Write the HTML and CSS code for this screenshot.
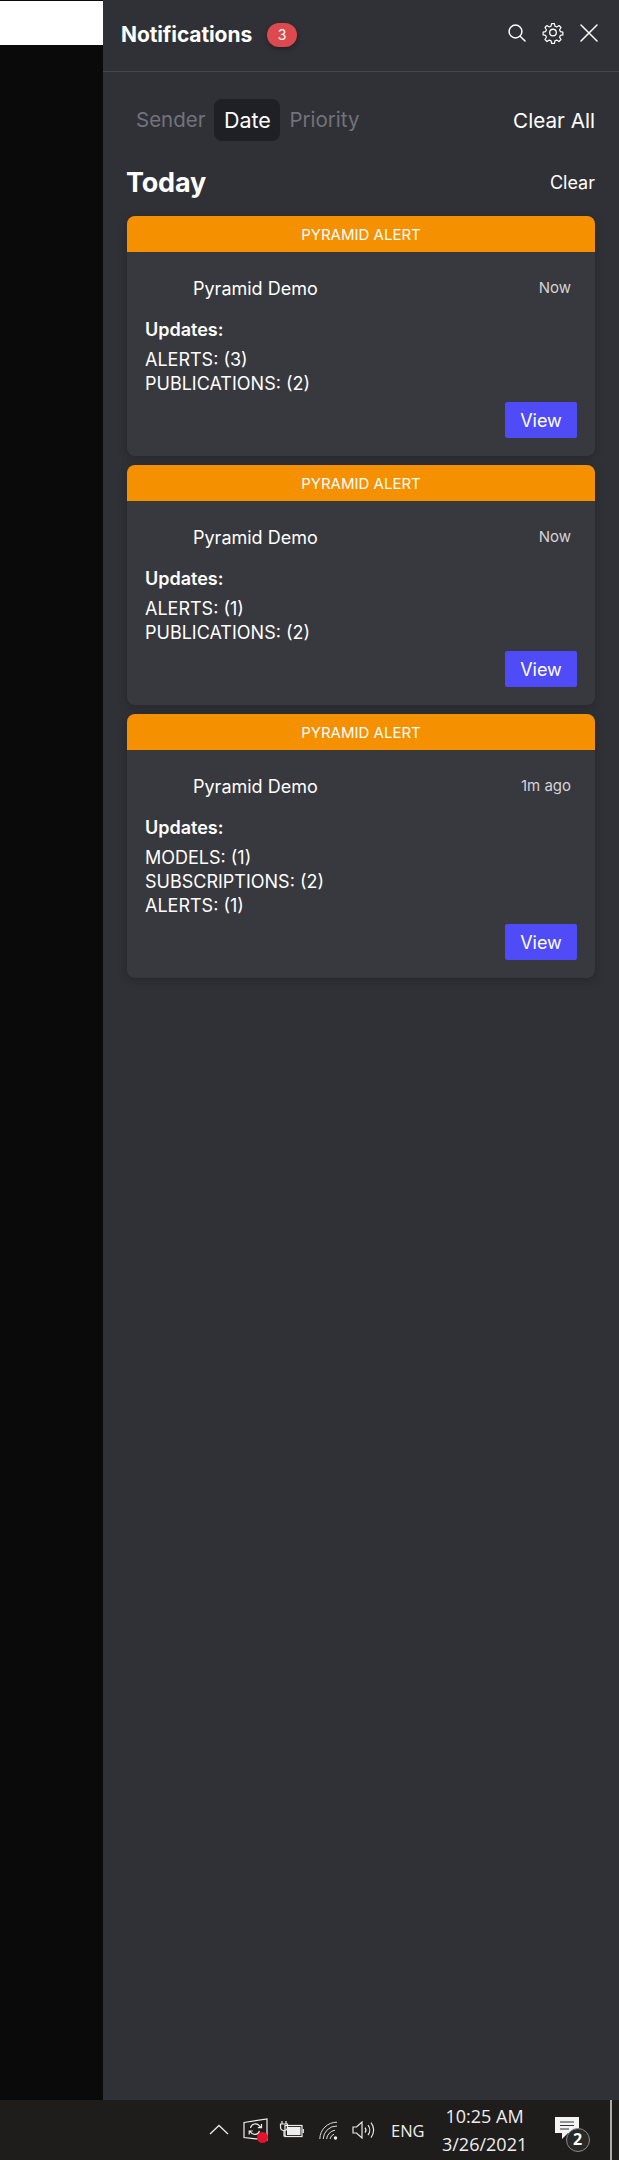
FILE: index.html
```html
<!DOCTYPE html>
<html lang="en">
<head>
<meta charset="utf-8">
<title>Notifications</title>
<link rel="stylesheet" href="styles.css">
</head>
<body>
<div class="screen">
  <div class="main">
    <div class="backdrop"><div class="backdrop-white"></div></div>
    <aside class="panel">
      <header class="panel-head">
        <div class="title">Notifications</div>
        <div class="badge">3</div>
        <div class="head-icons">
          <svg class="ic-search" width="18" height="18" viewBox="0 0 18 18" fill="none" stroke="#fff" stroke-width="1.5" stroke-linecap="round"><circle cx="7.5" cy="7.5" r="6.4"/><path d="M12.2 12.2 17 17"/></svg>
          <svg class="ic-gear" width="22" height="22" viewBox="0 0 24 24" fill="none" stroke="#fff" stroke-width="1.4" stroke-linejoin="round"><path d="M10.3 1.5h3.4l.6 3 2.2.9 2.6-1.7 2.4 2.4-1.7 2.6.9 2.2 3 .6v3.4l-3 .6-.9 2.2 1.7 2.6-2.4 2.4-2.6-1.7-2.2.9-.6 3h-3.4l-.6-3-2.2-.9-2.6 1.7-2.4-2.4 1.7-2.6-.9-2.2-3-.6v-3.4l3-.6.9-2.2-1.7-2.6 2.4-2.4 2.6 1.7 2.2-.9z" transform="translate(12 12) scale(.92) translate(-12 -12.6)"/><circle cx="12" cy="11.5" r="3.6"/></svg>
          <svg class="ic-close" width="18" height="18" viewBox="0 0 18 18" fill="none" stroke="#fff" stroke-width="1.5" stroke-linecap="round"><path d="M1 1 17 17M17 1 1 17"/></svg>
        </div>
      </header>
      <div class="tabs-row">
        <div class="tabs">
          <span class="tab">Sender</span>
          <span class="tab tab-active">Date</span>
          <span class="tab">Priority</span>
        </div>
        <span class="clear-all">Clear All</span>
      </div>
      <div class="day-row">
        <h2 class="day">Today</h2>
        <span class="clear">Clear</span>
      </div>
      <div class="cards">
        <article class="card">
          <div class="card-head">PYRAMID ALERT</div>
          <div class="card-body">
            <div class="sender-row"><span class="sender">Pyramid Demo</span><span class="time">Now</span></div>
            <div class="updates">Updates:</div>
            <ul class="items"><li>ALERTS: (3)</li><li>PUBLICATIONS: (2)</li></ul>
            <div class="actions"><button class="view">View</button></div>
          </div>
        </article>
        <article class="card">
          <div class="card-head">PYRAMID ALERT</div>
          <div class="card-body">
            <div class="sender-row"><span class="sender">Pyramid Demo</span><span class="time">Now</span></div>
            <div class="updates">Updates:</div>
            <ul class="items"><li>ALERTS: (1)</li><li>PUBLICATIONS: (2)</li></ul>
            <div class="actions"><button class="view">View</button></div>
          </div>
        </article>
        <article class="card">
          <div class="card-head">PYRAMID ALERT</div>
          <div class="card-body">
            <div class="sender-row"><span class="sender">Pyramid Demo</span><span class="time">1m ago</span></div>
            <div class="updates">Updates:</div>
            <ul class="items"><li>MODELS: (1)</li><li>SUBSCRIPTIONS: (2)</li><li>ALERTS: (1)</li></ul>
            <div class="actions"><button class="view">View</button></div>
          </div>
        </article>
      </div>
    </aside>
  </div>
  <footer class="taskbar">
    <svg class="tb-chevron" width="20" height="11" viewBox="0 0 20 11" fill="none" stroke="#e8e8e8" stroke-width="1.3"><path d="M1 10 10 1.5 19 10"/></svg>
    <span class="tb-sync">
      <svg width="25" height="23" viewBox="0 0 25 23" fill="none" stroke="#eee" stroke-width="1.2"><path d="M1 4.500 24 1v21L1 19.500z"/><path d="M7.500 10a5 5 0 0 1 9-2l1.500 1.500M18.500 6v3.600h-3.600M16.500 13a5 5 0 0 1-9 1l-1-1.200M6.200 16.500V13h3.600"/></svg>
      <span class="tb-dot"></span>
    </span>
    <svg class="tb-battery" width="25" height="17" viewBox="0 0 25 17" fill="none" stroke="#eee" stroke-width="1.2"><path d="M3 0v3M7 0v3M1.500 3h7v3a3.500 3.500 0 0 1-7 0zM5 9.500V15h2"/><rect x="6" y="4.500" width="17" height="11"/><rect x="8" y="6" width="13.500" height="8" fill="#eee" stroke="none"/><path d="M24.300 8v4"/></svg>
    <svg class="tb-wifi" width="19" height="19" viewBox="0 0 19 19" fill="none" stroke="#ddd" stroke-width="1"><path d="M.8 18A17 17 0 0 1 18 1.200M4.200 18A13.500 13.500 0 0 1 18 5M7.600 18A10 10 0 0 1 16 9.200M11 18a6.500 6.500 0 0 1 4-4.800"/><circle cx="16.500" cy="17" r="1.700" fill="#eee" stroke="none"/></svg>
    <svg class="tb-sound" width="23" height="18" viewBox="0 0 23 18" fill="none" stroke="#e8e8e8" stroke-width="1.2"><path d="M1 6h3.500L10 1v16l-5.500-5H1z"/><path d="M13 6.500a4 4 0 0 1 0 5M16 4a8 8 0 0 1 0 10M19 1.500a12 12 0 0 1 0 15"/></svg>
    <span class="tb-lang">ENG</span>
    <div class="tb-clock"><span>10:25 AM</span><span>3/26/2021</span></div>
    <span class="tb-notif">
      <svg width="24" height="23" viewBox="0 0 24 23"><path d="M0 0h24v16H13l-6 6v-6H0z" fill="#f4f4f4"/><path d="M5 5h14M5 8.500h14M5 12h9" stroke="#333" stroke-width="1.200"/></svg>
      <span class="tb-count">2</span>
    </span>
    <span class="tb-divider"></span>
  </footer>
</div>
</body>
</html>
```

FILE: styles.css
```css
* { box-sizing: border-box; }
html, body { margin: 0; padding: 0; }
body {
  width: 619px;
  height: 2160px;
  overflow: hidden;
  font-family: Inter, "Liberation Sans", sans-serif;
  color: #fff;
  background: #1f1d1c;
}
.screen { display: flex; flex-direction: column; height: 2160px; }
.main { display: flex; height: 2100px; }
.backdrop { width: 103px; flex: none; background: #0a0a0a; padding-top: 1px; }
.backdrop-white { height: 44px; background: #fff; }
.panel { width: 516px; flex: none; background: #303137; }

.panel-head {
  display: flex;
  align-items: center;
  height: 72px;
  padding: 0 21px 2px 18px;
  border-bottom: 1px solid #46474d;
}
.title { font-size: 21px; font-weight: 700; letter-spacing: -.1px; }
.badge {
  width: 30px;
  height: 24px;
  margin-left: 15px;
  border-radius: 12px;
  background: #dc4a50;
  font-size: 14px;
  line-height: 24px;
  text-align: center;
  box-shadow: 0 2px 5px rgba(0,0,0,.35);
}
.head-icons { display: flex; align-items: center; margin: -3px 0 0 auto; }
.ic-search { margin-right: 16px; }
.ic-gear { margin-right: 16px; }

.tabs-row {
  display: flex;
  align-items: center;
  justify-content: space-between;
  height: 42px;
  margin-top: 27px;
  padding: 0 24px 0 24px;
}
.tabs { display: flex; align-items: center; }
.tab {
  padding: 0 9px;
  font-size: 20.500px;
  line-height: 42px;
  color: #72737b;
}
.tab-active {
  padding: 0 9.500px;
  background: #1f2025;
  border-radius: 8px;
  color: #fff;
  font-size: 21.500px;
}
.clear-all { font-size: 20.700px; }
.day-row {
  display: flex;
  align-items: center;
  justify-content: space-between;
  height: 36px;
  margin-top: 23px;
  padding: 0 24px;
}
.day { margin: 0 0 0 -1px; font-size: 27px; font-weight: 700; letter-spacing: -.2px; }
.clear { font-size: 18px; }

.cards {
  display: flex;
  flex-direction: column;
  gap: 9px;
  margin: 16px 24px 0;
}
.card {
  background: #38393e;
  border-radius: 8px;
  overflow: hidden;
  box-shadow: 0 2px 10px rgba(0,0,0,.22);
}
.card-head {
  height: 36px;
  padding-top: 1px;
  background: #f59000;
  font-size: 15px;
  line-height: 36px;
  text-align: center;
}
.card-body { padding: 25px 18px 18px; }
.sender-row { display: flex; align-items: center; justify-content: space-between; padding: 0 6px 0 48px; }
.sender { font-size: 18px; line-height: 24px; }
.time { font-size: 15px; color: #d4d4d6; margin-top: -3px; }
.updates { margin-top: 17px; font-size: 18px; line-height: 24px; font-weight: 600; }
.items { list-style: none; margin: 6px 0 0; padding: 0; font-size: 18px; line-height: 24px; }
.actions { display: flex; justify-content: flex-end; margin-top: 6px; }
.view {
  width: 72px;
  height: 36px;
  border: 0;
  border-radius: 2px;
  background: #4f4bf6;
  color: #fff;
  font: 18px Inter, "Liberation Sans", sans-serif;
  padding: 0;
}

.taskbar {
  display: flex;
  align-items: center;
  height: 60px;
  background: #1f1d1c;
  padding-left: 209px;
}
.tb-chevron { margin-top: -2px; }
.tb-sync { position: relative; display: block; width: 25px; height: 23px; margin: -2px 0 0 14px; }
.tb-sync svg { display: block; }
.tb-dot {
  position: absolute;
  left: 14px;
  top: 14px;
  width: 11px;
  height: 11px;
  border-radius: 50%;
  background: #e8112d;
}
.tb-battery { margin: -2px 0 0 11px; }
.tb-wifi { margin: 1px 0 0 15px; }
.tb-sound { margin: -1px 0 0 14px; }
.tb-lang { margin-left: 16px; font: 16.500px "Open Sans", "Liberation Sans", sans-serif; color: #eee; }
.tb-clock {
  display: flex;
  flex-direction: column;
  align-items: center;
  width: 84px;
  margin-left: 18px;
  font: 18px/28px "Open Sans", "Liberation Sans", sans-serif;
  color: #eee;
}
.tb-notif { position: relative; display: block; width: 24px; height: 23px; margin: -4px 0 0 28px; }
.tb-notif svg { display: block; }
.tb-count {
  position: absolute;
  left: 11px;
  top: 11px;
  width: 24px;
  height: 24px;
  border-radius: 50%;
  border: 1.500px solid #8b8b8b;
  background: #2a2928;
  color: #fff;
  font: 700 16px/21px "Open Sans", "Liberation Sans", sans-serif;
  text-align: center;
}
.tb-divider { width: 2px; height: 60px; margin-left: 31px; background: #a9a9a9; }
```
